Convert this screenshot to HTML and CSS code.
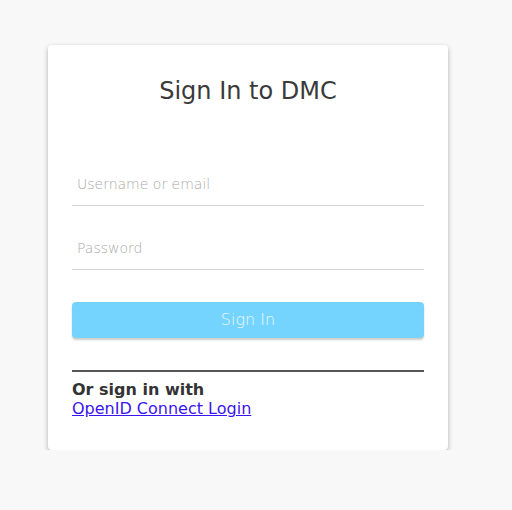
FILE: index.html
```html
<!DOCTYPE html>
<html>
<head>
<meta charset="utf-8">
<link rel="stylesheet" href="styles.css">
</head>
<body>
<div class="card">
  <h1 class="title">Sign In to DMC</h1>
  <form class="form">
    <input class="field field-user" type="text" placeholder="Username or email">
    <input class="field field-pass" type="password" placeholder="Password">
    <button class="btn" type="button">Sign In</button>
  </form>
  <hr class="divider">
  <div class="alt">
    <div class="alt-label">Or sign in with</div>
    <a class="alt-link" href="#">OpenID Connect Login</a>
  </div>
</div>
</body>
</html>
```
FILE: styles.css
```css
html, body {
  margin: 0;
  padding: 0;
  background: #f8f8f8;
  font-family: "DejaVu Sans", sans-serif;
  color: #333;
}
body {
  padding: 45px 0 0 48px;
}
.card {
  width: 400px;
  height: 405px;
  box-sizing: border-box;
  background: #fff;
  border-radius: 4px;
  box-shadow: 0 2px 5px rgba(0,0,0,0.3);
  padding: 32px 24px 0 24px;
}
.title {
  margin: 0;
  font-size: 24px;
  font-weight: normal;
  line-height: 28px;
  text-align: center;
  color: #3a3a3a;
}
.form {
  display: flex;
  flex-direction: column;
  margin-top: 61px;
}
.field {
  display: block;
  height: 40px;
  box-sizing: border-box;
  border: none;
  border-bottom: 1px solid #d4d4d4;
  padding: 0 5px 4px 5px;
  font-family: "DejaVu Sans", sans-serif;
  font-weight: 200;
  font-size: 14px;
  outline: none;
  background: transparent;
}
.field::placeholder {
  color: #aaa;
}
.field-pass {
  margin-top: 24px;
}
.btn {
  margin-top: 32px;
  height: 36px;
  padding: 0 0 2px 0;
  border: none;
  border-radius: 4px;
  background: #75d4fe;
  color: #e6f7ff;
  font-family: "DejaVu Sans", sans-serif;
  font-weight: 200;
  font-size: 16px;
  box-shadow: 0 2px 2px rgba(0,0,0,0.2);
}
.divider {
  margin: 32px 0 0 0;
  border: none;
  border-top: 2px solid #555;
  height: 0;
}
.alt {
  margin-top: 8px;
  font-size: 16px;
  line-height: 19px;
}
.alt-label {
  font-weight: bold;
  color: #333;
}
.alt-link {
  color: #3a14f0;
}
```
